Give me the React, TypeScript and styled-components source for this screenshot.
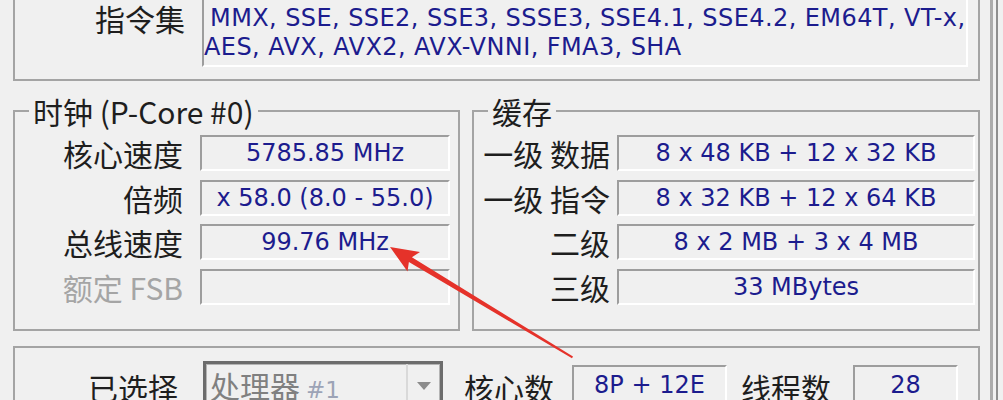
import React from 'react';
import styled, { createGlobalStyle } from 'styled-components';

const cjk = `"Noto Sans CJK SC", "Noto Sans", sans-serif`;
const latin = `"DejaVu Sans", "Noto Sans CJK SC", sans-serif`;

const GlobalStyle = createGlobalStyle`
  html, body {
    margin: 0;
    padding: 0;
    background: #f0f0f0;
  }
  #root {
    width: 1003px;
    height: 400px;
    overflow: hidden;
  }
`;

// window frame
const Window = styled.div`
  position: relative;
  display: flex;
  width: 1003px;
  height: 400px;
  overflow: hidden;
  background: #f0f0f0;
`;

const Panel = styled.div`
  box-sizing: border-box;
  width: 993px;
  flex-shrink: 0;
  height: 100%;
  padding: 0 10px 0 13px;
  border-right: 3px solid #ababab;
  display: flex;
  flex-direction: column;
`;

const Edge = styled.div`
  margin-left: 3px;
  width: 5px;
  border-left: 2px solid #8e8e8e;
`;

// plain bordered box (no title)
const Box = styled.div`
  box-sizing: border-box;
  border: 2px solid #a4a4a4;
`;

// titled group
const Group = styled.fieldset<{ $label: number; $gap: number; $pad: number }>`
  margin: 0;
  min-width: 0;
  border: 2px solid #a4a4a4;
  padding: 7px ${p => p.$pad}px 24px 0;
  display: grid;
  grid-template-columns: ${p => p.$label}px 1fr;
  column-gap: ${p => p.$gap}px;
  row-gap: 8.5px;
  align-content: start;
`;

const Legend = styled.legend`
  margin-left: 14px;
  padding: 0 4px;
  font-family: ${cjk};
  font-size: 30px;
  line-height: 34px;
  color: #1e1e1e;
`;

const Label = styled.div<{ $dim?: boolean }>`
  font-family: ${cjk};
  font-size: 30px;
  line-height: 36px;
  text-align: right;
  white-space: nowrap;
  color: ${p => (p.$dim ? '#a5a5a5' : '#1e1e1e')};
`;

const Field = styled.div`
  box-sizing: border-box;
  height: 36px;
  border-top: 2px solid #9d9d9d;
  border-left: 2px solid #9d9d9d;
  border-bottom: 2px solid #ffffff;
  border-right: 2px solid #ffffff;
  display: flex;
  align-items: center;
  justify-content: center;
  font-family: ${latin};
  font-size: 24px;
  color: #1c1c8e;
  white-space: nowrap;
  overflow: hidden;
`;

// instructions
const InstrGroup = styled(Box)`
  margin-top: -28px;
  padding: 24px 10px 12px 0;
  display: grid;
  grid-template-columns: 170px 1fr;
  column-gap: 17px;
`;

const InstrLabel = styled(Label)`
  padding-top: 5.5px;
  line-height: 29px;
`;

const InstrField = styled(Field)`
  height: auto;
  display: block;
  padding: 3.5px 0;
  line-height: 29px;
  letter-spacing: 0.42px;
`;

const Line = styled.div<{ $indent?: number }>`
  padding-left: ${p => p.$indent ?? 0}px;
  white-space: nowrap;
`;

const MidRow = styled.div`
  display: grid;
  grid-template-columns: 447px 508px;
  column-gap: 12px;
  margin-top: 13px;
`;

// selection row
const SelectBox = styled(Box)`
  margin-top: 15px;
  padding-top: 13px;
  display: flex;
  align-items: flex-start;
`;

const RowLabel = styled(Label)<{ $gap?: number; $w?: number }>`
  margin-top: 8px;
  margin-left: ${p => p.$gap ?? 0}px;
  width: ${p => (p.$w ? `${p.$w}px` : 'auto')};
`;

const CountField = styled(Field)<{ $gap: number; $w: number }>`
  margin-top: 4px;
  margin-left: ${p => p.$gap}px;
  width: ${p => p.$w}px;
  height: 40px;
`;

const Combo = styled.div`
  box-sizing: border-box;
  margin-left: 25px;
  width: 240px;
  height: 44px;
  border: 3px solid #6c6c6c;
  box-shadow: inset 0 0 0 1px #b4b4b4;
  display: flex;
`;

const ComboText = styled.div`
  flex: 1;
  padding: 4px 0 0 4px;
  font-family: ${cjk};
  font-size: 30px;
  line-height: 34px;
  color: #808080;
  white-space: nowrap;
`;

const ComboNum = styled.span`
  font-family: ${latin};
  font-size: 23px;
  color: #9ca3b6;
  margin-left: 6px;
`;

const DropButton = styled.div`
  width: 34px;
  border-left: 2px solid #d9d9d9;
  display: flex;
  justify-content: center;
  padding-top: 18px;
  box-sizing: border-box;
`;

const Overlay = styled.svg`
  position: absolute;
  left: 0;
  top: 0;
  width: 1003px;
  height: 400px;
  pointer-events: none;
`;

const clockRows = [
  { label: '核心速度', value: '5785.85 MHz' },
  { label: '倍频', value: 'x 58.0 (8.0 - 55.0)' },
  { label: '总线速度', value: '99.76 MHz' },
  { label: '额定 FSB', value: '', dim: true },
];

const cacheRows = [
  { label: '一级 数据', value: '8 x 48 KB + 12 x 32 KB' },
  { label: '一级 指令', value: '8 x 32 KB + 12 x 64 KB' },
  { label: '二级', value: '8 x 2 MB + 3 x 4 MB' },
  { label: '三级', value: '33 MBytes' },
];

const App: React.FC = () => (
  <Window>
    <GlobalStyle />
    <Panel>
      <InstrGroup>
        <InstrLabel>指令集</InstrLabel>
        <InstrField>
          <Line $indent={6}>MMX, SSE, SSE2, SSE3, SSSE3, SSE4.1, SSE4.2, EM64T, VT-x,</Line>
          <Line>AES, AVX, AVX2, AVX-VNNI, FMA3, SHA</Line>
        </InstrField>
      </InstrGroup>

      <MidRow>
        <Group $label={168} $gap={17} $pad={8}>
          <Legend>时钟 (P-Core #0)</Legend>
          {clockRows.map(r => (
            <React.Fragment key={r.label}>
              <Label $dim={r.dim}>{r.label}</Label>
              <Field>{r.value}</Field>
            </React.Fragment>
          ))}
        </Group>
        <Group $label={136} $gap={7} $pad={3}>
          <Legend>缓存</Legend>
          {cacheRows.map(r => (
            <React.Fragment key={r.label}>
              <Label>{r.label}</Label>
              <Field>{r.value}</Field>
            </React.Fragment>
          ))}
        </Group>
      </MidRow>

      <SelectBox>
        <RowLabel $w={163}>已选择</RowLabel>
        <Combo>
          <ComboText>
            处理器<ComboNum>#1</ComboNum>
          </ComboText>
          <DropButton>
            <svg width="14" height="8" viewBox="0 0 14 8">
              <polygon points="0,0 14,0 7,8" fill="#8c8c8c" />
            </svg>
          </DropButton>
        </Combo>
        <RowLabel $gap={21}>核心数</RowLabel>
        <CountField $gap={18} $w={155}>8P + 12E</CountField>
        <RowLabel $gap={14}>线程数</RowLabel>
        <CountField $gap={22} $w={105}>28</CountField>
      </SelectBox>
    </Panel>
    <Edge />

    <Overlay viewBox="0 0 1003 400">
      <polygon
        points="390,247 407.5,271.5 408.9,262 572,358.3 573,356.5 411.9,257.2 420,252"
        fill="#e5322a"
      />
    </Overlay>
  </Window>
);

export default App;
